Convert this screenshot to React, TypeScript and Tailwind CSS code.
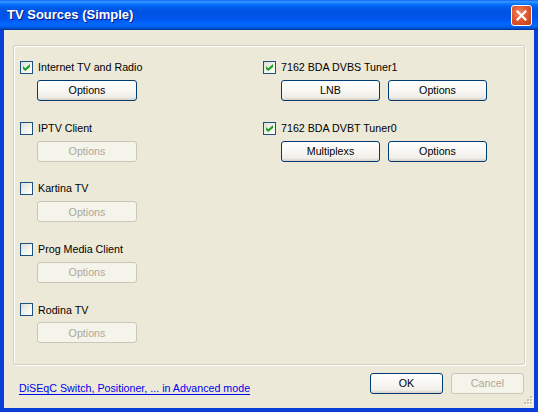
import React from "react";

type Source = {
  name: string;
  checked: boolean;
  buttons: string[];
};

const leftSources: Source[] = [
  { name: "Internet TV and Radio", checked: true, buttons: ["Options"] },
  { name: "IPTV Client", checked: false, buttons: ["Options"] },
  { name: "Kartina TV", checked: false, buttons: ["Options"] },
  { name: "Prog Media Client", checked: false, buttons: ["Options"] },
  { name: "Rodina TV", checked: false, buttons: ["Options"] },
];

const rightSources: Source[] = [
  { name: "7162 BDA DVBS Tuner1", checked: true, buttons: ["LNB", "Options"] },
  { name: "7162 BDA DVBT Tuner0", checked: true, buttons: ["Multiplexs", "Options"] },
];

const CheckBox = ({ checked }: { checked: boolean }) => (
  <div className="w-[13px] h-[13px] border border-[#1C5180] bg-[linear-gradient(135deg,#DCDCD7_0%,#F0F0EA_45%,#FFFFFF_100%)] flex items-center justify-center shrink-0">
    {checked && (
      <svg width="7" height="7" viewBox="0 0 7 7">
        <path d="M0 2 L2.2 4.2 L7 0 L7 3 L2.2 7 L0 5 Z" fill="#21A121" />
      </svg>
    )}
  </div>
);

const XpButton = ({ label, enabled, w }: { label: string; enabled: boolean; w: string }) =>
  enabled ? (
    <div
      className={`${w} h-[21px] rounded-[3px] border border-[#003C74] bg-[linear-gradient(to_bottom,#FFFFFF_0%,#F8F7F3_50%,#EFEEE8_85%,#D6D0C5_100%)] flex items-center justify-center text-black`}
    >
      {label}
    </div>
  ) : (
    <div
      className={`${w} h-[21px] rounded-[3px] border border-[#C9C7BA] bg-[#F5F4EA] flex items-center justify-center text-[#ACA899]`}
    >
      {label}
    </div>
  );

const SourceRow = ({ src, btnGap }: { src: Source; btnGap: boolean }) => (
  <div className="flex flex-col h-[61px]">
    <div className="flex items-center h-[13px]">
      <CheckBox checked={src.checked} />
      <span className="ml-[5px] leading-none">{src.name}</span>
    </div>
    <div className={`flex mt-[6px] ${btnGap ? "ml-[18px] gap-[8px]" : "ml-[17px]"}`}>
      {src.buttons.map((b, i) => (
        <XpButton key={i} label={b} enabled={src.checked} w={btnGap ? "w-[99px]" : "w-[100px]"} />
      ))}
    </div>
  </div>
);

export default function App() {
  return (
    <div className="w-[538px] h-[412px] flex flex-col font-['Liberation_Sans',Arial,sans-serif] text-[10.7px] text-black relative">
      {/* title bar */}
      <div className="h-[30px] shrink-0 flex items-center justify-between pl-[7px] pr-[6px] bg-[linear-gradient(to_bottom,#0058EE_0%,#3593FF_4%,#288EFF_8%,#127DFF_12%,#036FFC_16%,#0262EE_22%,#0057E5_30%,#0054E3_40%,#0055EB_60%,#005BF5_70%,#026AFE_80%,#0062EF_88%,#0052D6_94%,#0040AB_97%,#003092_100%)]">
        <span className="text-white font-bold text-[13px] [text-shadow:1px_1px_0_#0A1883]">TV Sources (Simple)</span>
        <div className="w-[21px] h-[21px] rounded-[3px] border border-white bg-[radial-gradient(circle_at_40%_35%,#F08A68_0%,#E05A32_45%,#C23A10_100%)] flex items-center justify-center">
          <svg width="11" height="11" viewBox="0 0 11 11">
            <path d="M1.5 1.5 L9.5 9.5 M9.5 1.5 L1.5 9.5" stroke="white" strokeWidth="2.2" strokeLinecap="square" />
          </svg>
        </div>
      </div>

      {/* client area */}
      <div className="flex-1 flex flex-col bg-[#ECE9D8] border-l-4 border-r-4 border-b-4 border-[#0A3FD8]">
        <div className="mx-[9px] mt-[15px] h-[320px] rounded-[3px] border border-[#D0D0BF] shadow-[inset_1px_1px_0_#FFFFFF,1px_1px_0_#FFFFFF] pl-[6px] pt-[15px] flex">
          <div className="w-[243px] flex flex-col">
            {leftSources.map((s, i) => (
              <SourceRow key={i} src={s} btnGap={false} />
            ))}
          </div>
          <div className="flex flex-col">
            {rightSources.map((s, i) => (
              <SourceRow key={i} src={s} btnGap={true} />
            ))}
          </div>
        </div>

        <div className="flex items-start mt-[8px] pl-[15px] pr-[10px]">
          <span className="mt-[10px] text-[#0000EE] underline underline-offset-[2px] leading-none">
            DiSEqC Switch, Positioner, ... in Advanced mode
          </span>
          <div className="ml-auto flex gap-[8px]">
            <XpButton label="OK" enabled={true} w="w-[73px]" />
            <XpButton label="Cancel" enabled={false} w="w-[73px]" />
          </div>
        </div>
      </div>

      {/* size grip */}
      <svg className="absolute right-[5px] bottom-[5px]" width="12" height="12" viewBox="0 0 12 12">
        {[
          [9, 1],
          [6, 4],
          [9, 4],
          [3, 7],
          [6, 7],
          [9, 7],
        ].map(([x, y], i) => (
          <g key={i}>
            <rect x={x + 1} y={y + 1} width="2" height="2" fill="#FFFFFF" />
            <rect x={x} y={y} width="2" height="2" fill="#C5C2B2" />
          </g>
        ))}
      </svg>
    </div>
  );
}
